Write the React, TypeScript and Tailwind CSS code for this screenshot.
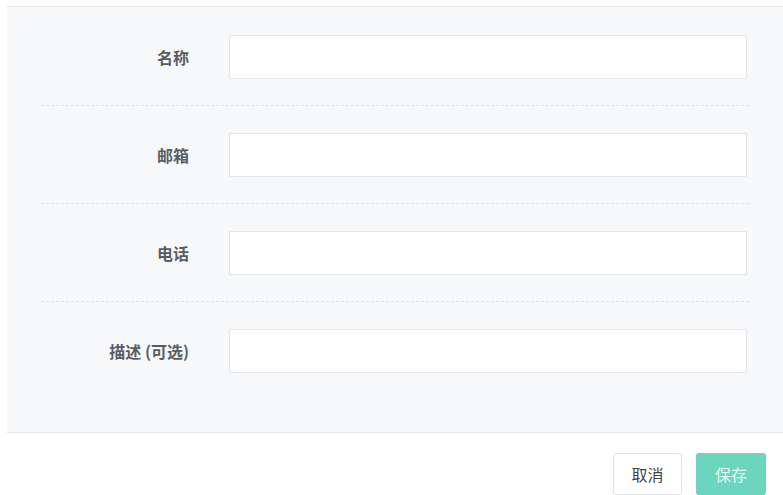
const font = { fontFamily: '"Noto Sans CJK SC", "Liberation Sans", sans-serif' }

const fields = ['名称', '邮箱', '电话', '描述 (可选)']

export default function App() {
  return (
    <div className="w-[783px] h-[495px] overflow-hidden bg-white pl-[7px] pt-[6px]" style={font}>
      <div className="bg-[#f7f8fa] border-t border-b border-[#e6e8eb] pt-px pb-[33px]">
        <div className="px-[34px]">
          {fields.map((label, i) => (
            <div
              key={label}
              className={`flex items-center pt-[27px] pb-[26px] ${
                i < fields.length - 1 ? 'border-b border-dashed border-[#e3e5e8]' : ''
              }`}
            >
              <label className="w-[148px] shrink-0 text-right text-[16px] font-bold text-[#595d63]">
                {label}
              </label>
              <input
                type="text"
                className="ml-[40px] mr-[2px] flex-1 h-[44px] bg-white border border-[#e4e6ea] rounded-[2px] px-3 text-sm outline-none"
              />
            </div>
          ))}
        </div>
      </div>
      <div className="flex justify-end gap-[14px] mt-[20px] pr-[17px]">
        <button
          type="button"
          className="w-[69px] h-[42px] bg-white border border-[#e1e3e6] rounded-[3px] text-[16px] text-[#444]"
        >
          取消
        </button>
        <button
          type="button"
          className="w-[70px] h-[42px] bg-[#6cd5bd] rounded-[3px] text-[16px] text-[#e6f8f3]"
        >
          保存
        </button>
      </div>
    </div>
  )
}
